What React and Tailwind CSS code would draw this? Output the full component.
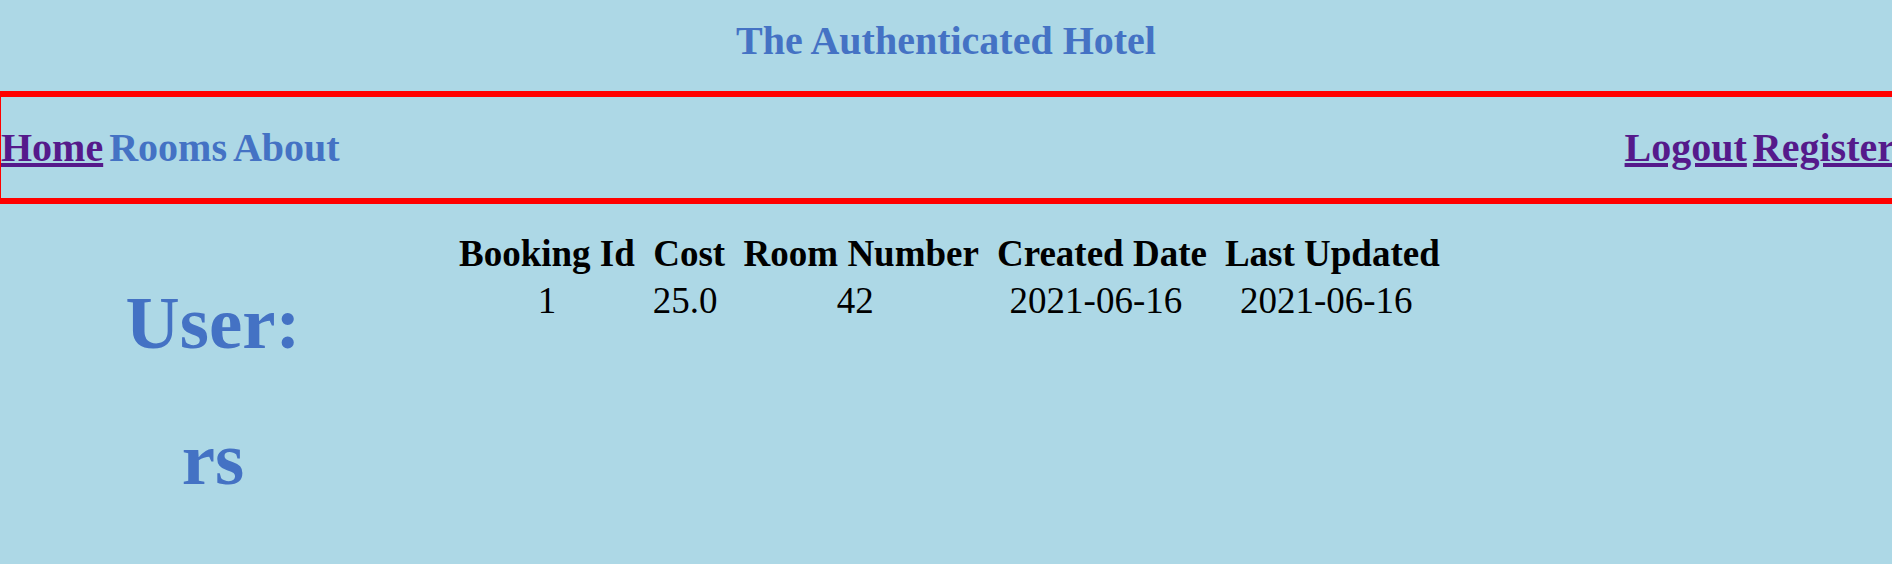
const link = "text-[#551a8b] underline";

export default function App() {
  return (
    <div className="min-h-screen overflow-x-hidden bg-[#add8e6] font-['Liberation_Serif',serif] text-[#4472c4]">
      <header className="pt-[18px] pb-[27px] text-center">
        <h1 className="text-[40px] leading-[46px] font-bold">The Authenticated Hotel</h1>
      </header>
      <nav className="-mr-[3px] flex justify-between border-y-[6px] border-l border-[#ff0000] pt-[27px] pb-[26px] text-[40px] leading-[48px] font-bold">
        <div className="flex gap-[6px]">
          <a href="#home" className={link}>Home</a>
          <span>Rooms</span>
          <span>About</span>
        </div>
        <div className="flex gap-[6px]">
          <a href="#logout" className={link}>Logout</a>
          <a href="#register" className={link}>Register</a>
        </div>
      </nav>
      <main className="flex">
        <section className="w-[426px] shrink-0 pt-[75px] text-center text-[75px] leading-[88px] font-bold">
          <h2>User:</h2>
          <h2 className="mt-[48px]">rs</h2>
        </section>
        <section className="pt-[26px] pl-[15px]">
          <table className="border-separate border-spacing-x-[18px] border-spacing-y-0 text-center text-[37px] leading-[47px] text-black">
            <thead>
              <tr>
                <th>Booking Id</th>
                <th>Cost</th>
                <th>Room Number</th>
                <th>Created Date</th>
                <th>Last Updated</th>
              </tr>
            </thead>
            <tbody>
              <tr>
                <td>1</td>
                <td className="pr-2">25.0</td>
                <td className="pr-3">42</td>
                <td className="pr-3">2021-06-16</td>
                <td className="pr-3">2021-06-16</td>
              </tr>
            </tbody>
          </table>
        </section>
      </main>
    </div>
  );
}
